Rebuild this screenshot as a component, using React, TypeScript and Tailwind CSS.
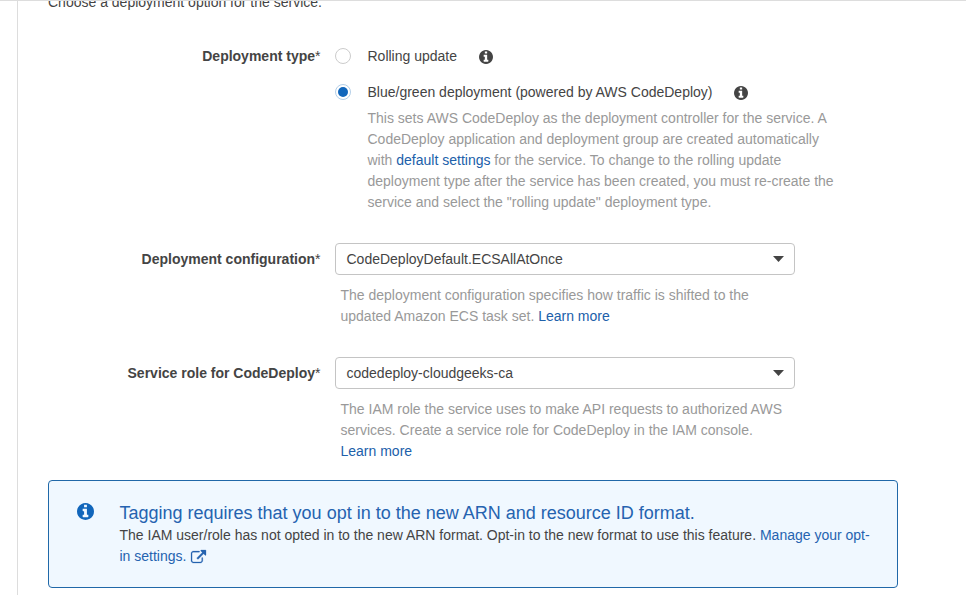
import type { ReactNode } from "react";

function InfoIcon({ className }: { className: string }) {
  return (
    <svg viewBox="0 0 1536 1536" fill="currentColor" className={className}>
      <path d="M1024 1248v-160q0-14-9-23t-23-9h-96V544q0-14-9-23t-23-9H544q-14 0-23 9t-9 23v160q0 14 9 23t23 9h96v320h-96q-14 0-23 9t-9 23v160q0 14 9 23t23 9h448q14 0 23-9t9-23zM896 352V192q0-14-9-23t-23-9H672q-14 0-23 9t-9 23v160q0 14 9 23t23 9h192q14 0 23-9t9-23zM1536 768q0 209-103 385.500T1153.500 1433 768 1536t-385.500-103T103 1153.500 0 768t103-385.500T382.500 103 768 0t385.500 103T1433 382.500 1536 768z" />
    </svg>
  );
}

function ExternalIcon({ className }: { className: string }) {
  return (
    <svg viewBox="0 0 1792 1536" preserveAspectRatio="none" fill="currentColor" stroke="currentColor" strokeWidth="30" className={className}>
      <path d="M1408 928v320q0 119-84.500 203.500T1120 1536H288q-119 0-203.500-84.500T0 1248V416q0-119 84.500-203.500T288 128h704q14 0 23 9t9 23v64q0 14-9 23t-23 9H288q-66 0-113 47t-47 113v832q0 66 47 113t113 47h832q66 0 113-47t47-113V928q0-14 9-23t23-9h64q14 0 23 9t9 23zM1792 64v512q0 26-19 45t-45 19-45-19l-176-176-652 652q-10 10-23 10t-23-10L695 983q-10-10-10-23t10-23l652-652-176-176q-19-19-19-45t19-45 45-19h512q26 0 45 19t19 45z" />
    </svg>
  );
}

function Label({ children }: { children: ReactNode }) {
  return (
    <div className="w-[320.5px] shrink-0 text-right font-bold text-[#444]">
      {children}
      <span className="font-normal">*</span>
    </div>
  );
}

function Select({ value }: { value: string }) {
  return (
    <div className="flex h-[32px] w-[460px] items-center justify-between rounded-[4px] border border-[#c4c4c4] bg-white pl-[10.500px] pr-[10px] text-[#444]">
      <span>{value}</span>
      <svg width="11" height="6" viewBox="0 0 11 6"><path d="M0 0h11L5.5 6z" fill="#444" /></svg>
    </div>
  );
}

function Radio({ checked }: { checked?: boolean }) {
  return (
    <span className={`mb-px flex size-[16px] shrink-0 items-center justify-center rounded-full border bg-white ${checked ? "border-[#b4cfe8]" : "border-[#ccc]"}`}>
      {checked && <span className="size-[10px] rounded-full bg-[#1166bb]" />}
    </span>
  );
}

export default function App() {
  return (
    <div className="h-[595px] w-[966px] overflow-hidden border-t border-[#ddd] bg-white font-['Liberation_Sans',Arial,sans-serif] text-[14px] leading-[21px] text-[#444]">
      <div className="ml-[17px] flow-root h-full border-l border-[#ddd]">
        <p className="-mt-[9px] ml-[30px]">Choose a deployment option for the service.</p>
        <div className="-ml-[18px] mt-[33px] flex">
          <Label>Deployment type</Label>
          <div className="ml-[14.5px]">
            <div className="flex h-[21px] items-center">
              <Radio />
              <span className="ml-[16.5px]">Rolling update</span>
              <InfoIcon className="ml-[22px] mt-px size-[14px] text-[#444]" />
            </div>
            <div className="mt-[15px] flex h-[21px] items-center">
              <Radio checked />
              <span className="ml-[16.5px]">Blue/green deployment (powered by AWS CodeDeploy)</span>
              <InfoIcon className="ml-[21.5px] mt-px size-[14px] text-[#444]" />
            </div>
            <p className="ml-[32.5px] mt-[5px] whitespace-nowrap text-[#999]">
              This sets AWS CodeDeploy as the deployment controller for the service. A<br />
              CodeDeploy application and deployment group are created automatically<br />
              with <span className="text-[#2060aa]">default settings</span> for the service. To change to the rolling update<br />
              deployment type after the service has been created, you must re-create the<br />
              service and select the "rolling update" deployment type.
            </p>
          </div>
        </div>
        <div className="-ml-[18px] mt-[30px] flex">
          <div className="pt-[6px]"><Label>Deployment configuration</Label></div>
          <div className="ml-[14.5px]">
            <Select value="CodeDeployDefault.ECSAllAtOnce" />
            <p className="ml-[5.5px] mt-[10px] whitespace-nowrap text-[#999]">
              The deployment configuration specifies how traffic is shifted to the<br />
              updated Amazon ECS task set. <span className="text-[#2060aa]">Learn more</span>
            </p>
          </div>
        </div>
        <div className="-ml-[18px] mt-[30px] flex">
          <div className="pt-[6px]"><Label>Service role for CodeDeploy</Label></div>
          <div className="ml-[14.5px]">
            <Select value="codedeploy-cloudgeeks-ca" />
            <p className="ml-[5.5px] mt-[10px] whitespace-nowrap text-[#999]">
              The IAM role the service uses to make API requests to authorized AWS<br />
              services. Create a service role for CodeDeploy in the IAM console.<br />
              <span className="text-[#2060aa]">Learn more</span>
            </p>
          </div>
        </div>
        <div className="ml-[30px] mt-[18px] flex h-[108px] w-[850px] rounded-[4px] border border-[#2068a8] bg-[#f0f8ff] pl-[28px] pt-[21px]">
          <InfoIcon className="mt-[1px] size-[17px] shrink-0 text-[#1166bb]" />
          <div className="ml-[25.5px] whitespace-nowrap">
            <h2 className="text-[18px] leading-[23px] text-[#2563b0]">Tagging requires that you opt in to the new ARN and resource ID format.</h2>
            <p>
              The IAM user/role has not opted in to the new ARN format. Opt-in to the new format to use this feature. <span className="text-[#2563b0]">Manage your opt-<br />in settings. <ExternalIcon className="mb-[2px] ml-[1px] inline h-[13px] w-[15px] overflow-visible" /></span>
            </p>
          </div>
        </div>
      </div>
    </div>
  );
}
